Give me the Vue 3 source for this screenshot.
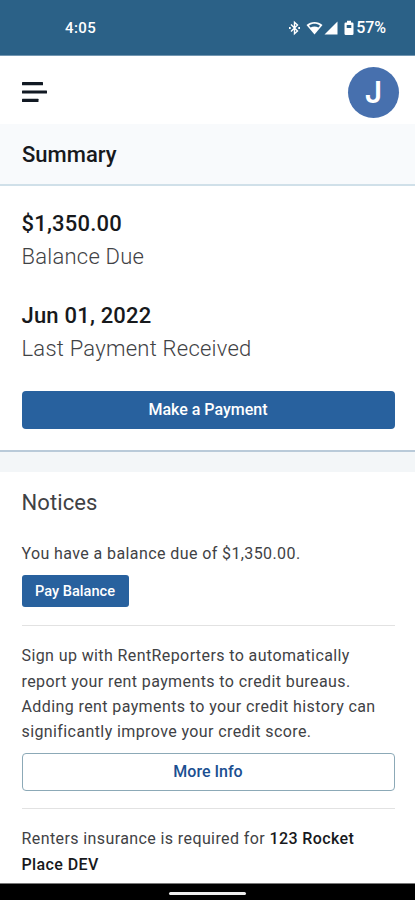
<script setup>
const summary = [
  { value: '$1,350.00', label: 'Balance Due', key: 'balance' },
  { value: 'Jun 01, 2022', label: 'Last Payment Received', key: 'payment' },
]
</script>

<template>
  <div class="screen">
    <div class="status">
      <span class="time">4:05</span>
      <div class="indicators">
        <svg class="bluetooth" width="13" height="16" viewBox="0 0 13 16" fill="none" stroke="#fff" stroke-width="1.4">
          <path d="M3 4.5L9.5 11L6.5 13.7V2.3L9.5 5L3 11.5" />
          <path d="M1 8h1.7M10.3 8H12" stroke-width="1.8" />
        </svg>
        <svg class="wifi" width="17" height="16" viewBox="0 0 17 16">
          <path d="M.5 5.1C5 .9 12 .9 16.500 5.1L8.500 14.500z" fill="#fff" />
          <path d="M3 5.700C6.200 3.100 10.800 3.100 14 5.700L12.400 7.600C10 6 7 6 4.600 7.600z" fill="#2b6187" />
        </svg>
        <svg class="signal" width="14" height="14" viewBox="0 0 14 14"><path d="M13.500 .5V13.500H.5z" fill="#fff" /></svg>
        <svg class="battery" width="10" height="16" viewBox="0 0 10 16">
          <path d="M3 .8h4v1.700h1.200q1.300 0 1.300 1.300v10q0 1.300-1.300 1.300H1.800Q.5 15.100.5 13.800v-10q0-1.300 1.300-1.300H3z" fill="#fff" />
          <path d="M2.700 5h4.600v3H2.700z" fill="#2b6187" />
        </svg>
        <span class="percent">57%</span>
      </div>
    </div>

    <header class="nav">
      <svg class="menu" width="26" height="22" viewBox="0 0 26 22" fill="#111923">
        <rect x="0" y="1" width="21" height="3.200" rx=".5" />
        <rect x="0" y="9.400" width="25" height="3.200" rx=".5" />
        <rect x="0" y="17.700" width="16.500" height="3.200" rx=".5" />
      </svg>
      <div class="avatar">J</div>
    </header>

    <h1 class="title">Summary</h1>

    <section class="summary">
      <div v-for="item in summary" :key="item.key" class="fact">
        <div class="value">{{ item.value }}</div>
        <div class="label">{{ item.label }}</div>
      </div>
      <button class="button primary">Make a Payment</button>
    </section>

    <section class="notices">
      <h2>Notices</h2>
      <div class="notice">
        <p class="due">You have a balance due of $1,350.00.</p>
        <button class="button small">Pay Balance</button>
      </div>
      <div class="notice">
        <p>Sign up with RentReporters to automatically<br>report your rent payments to credit bureaus.<br>Adding rent payments to your credit history can<br>significantly improve your credit score.</p>
        <button class="button outline">More Info</button>
      </div>
      <div class="notice">
        <p>Renters insurance is required for <b>123 Rocket<br>Place DEV</b></p>
      </div>
    </section>

    <footer class="gesture"><span></span></footer>
  </div>
</template>

<style>
body { background: #fff; }
</style>

<style scoped>
* { box-sizing: border-box; }
.screen {
  display: flex;
  flex-direction: column;
  width: 415px;
  height: 900px;
  overflow: hidden;
  background: #fff;
  color: #3f4245;
  font-family: Roboto, sans-serif;
}
.status {
  display: flex;
  flex: none;
  justify-content: space-between;
  align-items: center;
  height: 56px;
  padding: 0 29px 0 65px;
  border-bottom: 1px solid #7296b1;
  background: #2b6187;
  color: #fff;
}
.time, .percent { font: 500 15px/20px Roboto, sans-serif; }
.time { letter-spacing: .4px; }
.percent { font-size: 16px; letter-spacing: -.1px; }
.indicators { display: flex; align-items: center; }
.wifi { margin-left: 5px; }
.signal { margin-left: 1px; }
.battery { margin: 0 2px 0 6px; }
.nav {
  display: flex;
  flex: none;
  justify-content: space-between;
  align-items: center;
  height: 68px;
  padding: 4px 16px 0 22px;
}
.avatar {
  width: 51px;
  height: 51px;
  border-radius: 50%;
  background: #4770ae;
  color: #fff;
  font: 600 30px/50px Inter, sans-serif;
  text-align: center;
}
.title {
  flex: none;
  height: 62px;
  margin: 0;
  padding: 16px 22px 0;
  border-bottom: 2px solid #d0e0e9;
  background: #f8fafc;
  color: #17191c;
  font-size: 22px;
  font-weight: 500;
  line-height: 30px;
}
.summary {
  display: flex;
  flex: none;
  flex-direction: column;
  height: 266px;
  padding: 21px 20.500px 0 21.500px;
  border-bottom: 2px solid #b9cad9;
}
.fact { margin-bottom: 25px; }
.value {
  color: #17191c;
  font-size: 22px;
  font-weight: 500;
  line-height: 33px;
  letter-spacing: .2px;
}
.label {
  font-size: 22px;
  font-weight: 300;
  line-height: 34px;
  letter-spacing: .24px;
}
.button {
  display: block;
  padding: 0;
  border: 0;
  border-radius: 4px;
  background: #28619e;
  color: #fff;
  font: 500 16px/36px Roboto, sans-serif;
}
.primary { width: 100%; height: 38px; }
.notices {
  flex: 1;
  min-height: 0;
  padding: 15px 20.500px 0 21.500px;
  border-top: 20px solid #f3f6f8;
}
h2 {
  margin: 0;
  font-size: 22px;
  font-weight: 400;
  line-height: 32px;
  letter-spacing: .1px;
}
.notice { padding-bottom: 18px; border-bottom: 1px solid #e2e2e2; }
.notice:last-child { border: 0; }
.notice p {
  margin: 0;
  padding-top: 17px;
  font-size: 16px;
  line-height: 25.300px;
  letter-spacing: .4px;
}
.notice .due { padding-top: 22px; }
.notice:nth-of-type(2) { padding-bottom: 17px; }
b { color: #17191c; font-weight: 500; }
.small { width: 107px; height: 32px; margin-top: 9px; border-radius: 3px; font-size: 14.600px; line-height: 32px; }
.outline {
  width: 100%;
  height: 38px;
  margin-top: 9px;
  border: 1px solid #8ca9b7;
  background: #fff;
  color: #1b4f91;
  line-height: 34px;
}
.gesture {
  display: flex;
  flex: none;
  justify-content: center;
  height: 17px;
  padding-top: 8px;
  border-top: 1px solid #777;
  background: #000;
}
.gesture span { width: 77px; height: 3px; border-radius: 2px; background: #eee; }
</style>
